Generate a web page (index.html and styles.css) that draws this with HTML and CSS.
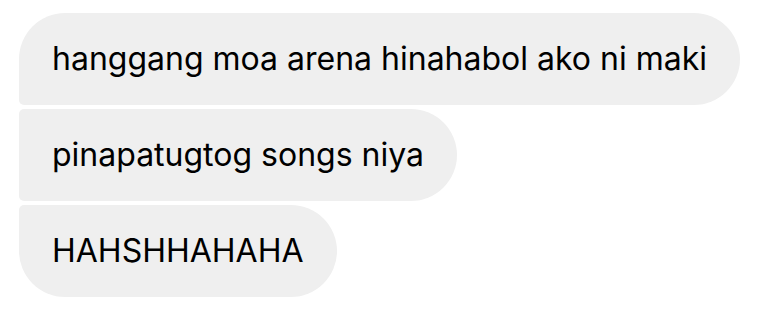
FILE: index.html
```html
<!DOCTYPE html>
<html lang="en">
<head>
    <meta charset="UTF-8">
    <meta name="viewport" content="width=device-width, initial-scale=1.0">
    <title>chat</title>
    <link rel="stylesheet" href="styles.css">
</head>
<body>
    <div class="thread">
        <div class="bubble first">hanggang moa arena hinahabol ako ni maki</div>
        <div class="bubble middle">pinapatugtog songs niya</div>
        <div class="bubble last">HAHSHHAHAHA</div>
    </div>
</body>
</html>
```

FILE: styles.css
```css
body {
    margin: 0;
    background-color: #ffffff;
    font-family: Inter, Roboto, Arial, sans-serif;
    color: #000000;
}
.thread {
    display: flex;
    flex-direction: column;
    align-items: flex-start;
    gap: 4px;
    padding: 13px 0 0 19px;
}
.bubble {
    background-color: #efefef;
    font-size: 32px;
    line-height: 38px;
    padding: 27px 33px;
    border-radius: 46px;
    white-space: nowrap;
}
.bubble.first {
    border-bottom-left-radius: 5px; /* grouped with next */
}
.bubble.middle {
    border-top-left-radius: 5px;
    border-bottom-left-radius: 5px;
}
.bubble.last {
    border-top-left-radius: 5px;
}
```
